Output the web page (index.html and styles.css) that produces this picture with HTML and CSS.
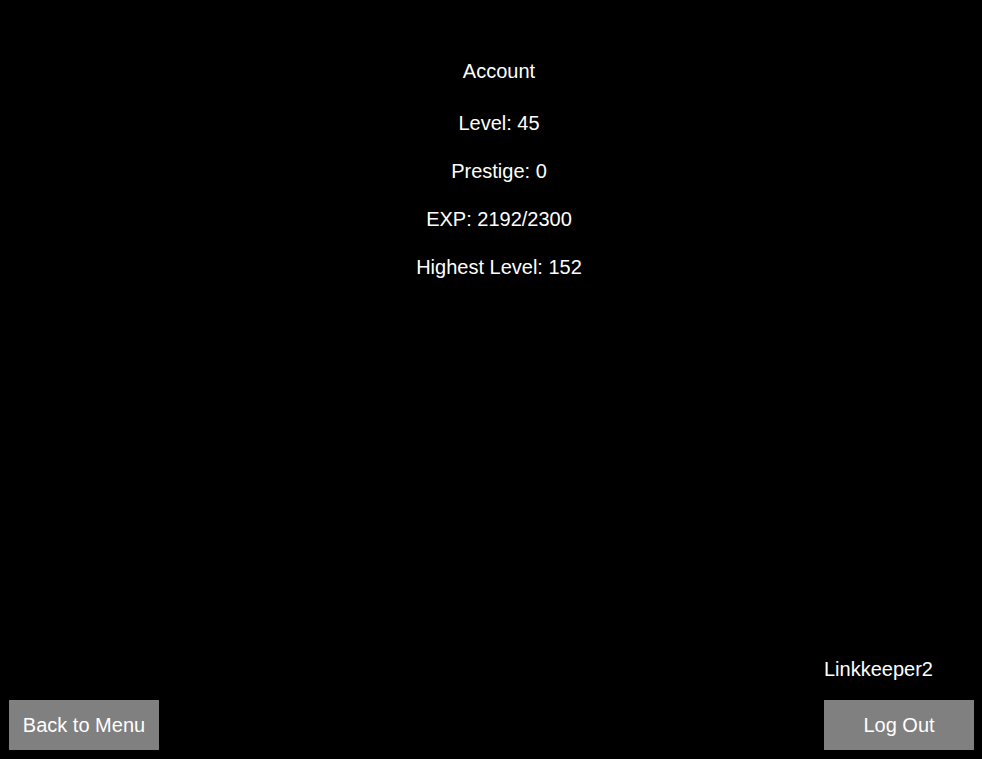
FILE: index.html
```html
<!DOCTYPE html>
<html lang="en">
<head>
<meta charset="utf-8">
<title>Account</title>
<link rel="stylesheet" href="styles.css">
</head>
<body>
<div class="screen">
  <main class="stats">
    <div class="title">Account</div>
    <div class="stat">Level: 45</div>
    <div class="stat">Prestige: 0</div>
    <div class="stat">EXP: 2192/2300</div>
    <div class="stat">Highest Level: 152</div>
  </main>
  <footer class="footer">
    <button class="btn">Back to Menu</button>
    <div class="account">
      <div class="username">Linkkeeper2</div>
      <button class="btn">Log Out</button>
    </div>
  </footer>
</div>
</body>
</html>
```
FILE: styles.css
```css
html, body {
  margin: 0;
  padding: 0;
  background: #000;
}
body {
  font-family: "Liberation Sans", Arial, sans-serif;
  font-size: 20px;
  color: #fff;
}
.screen {
  height: 759px;
  display: flex;
  flex-direction: column;
  justify-content: space-between;
}
.stats {
  padding: 47px 0 0 16px;
  text-align: center;
}
.title {
  line-height: 48px;
  margin-bottom: 4px;
}
.stat {
  line-height: 48px;
}
.footer {
  display: flex;
  justify-content: space-between;
  align-items: flex-end;
  padding: 0 8px 9px 9px;
}
.account {
  display: flex;
  flex-direction: column;
}
.username {
  line-height: 24px;
  margin-bottom: 19px;
}
.btn {
  width: 150px;
  height: 50px;
  background: #808080;
  color: #fff;
  border: none;
  padding: 0;
  margin: 0;
  font-family: "Liberation Sans", Arial, sans-serif;
  font-size: 20px;
  line-height: 50px;
  text-align: center;
}
```
